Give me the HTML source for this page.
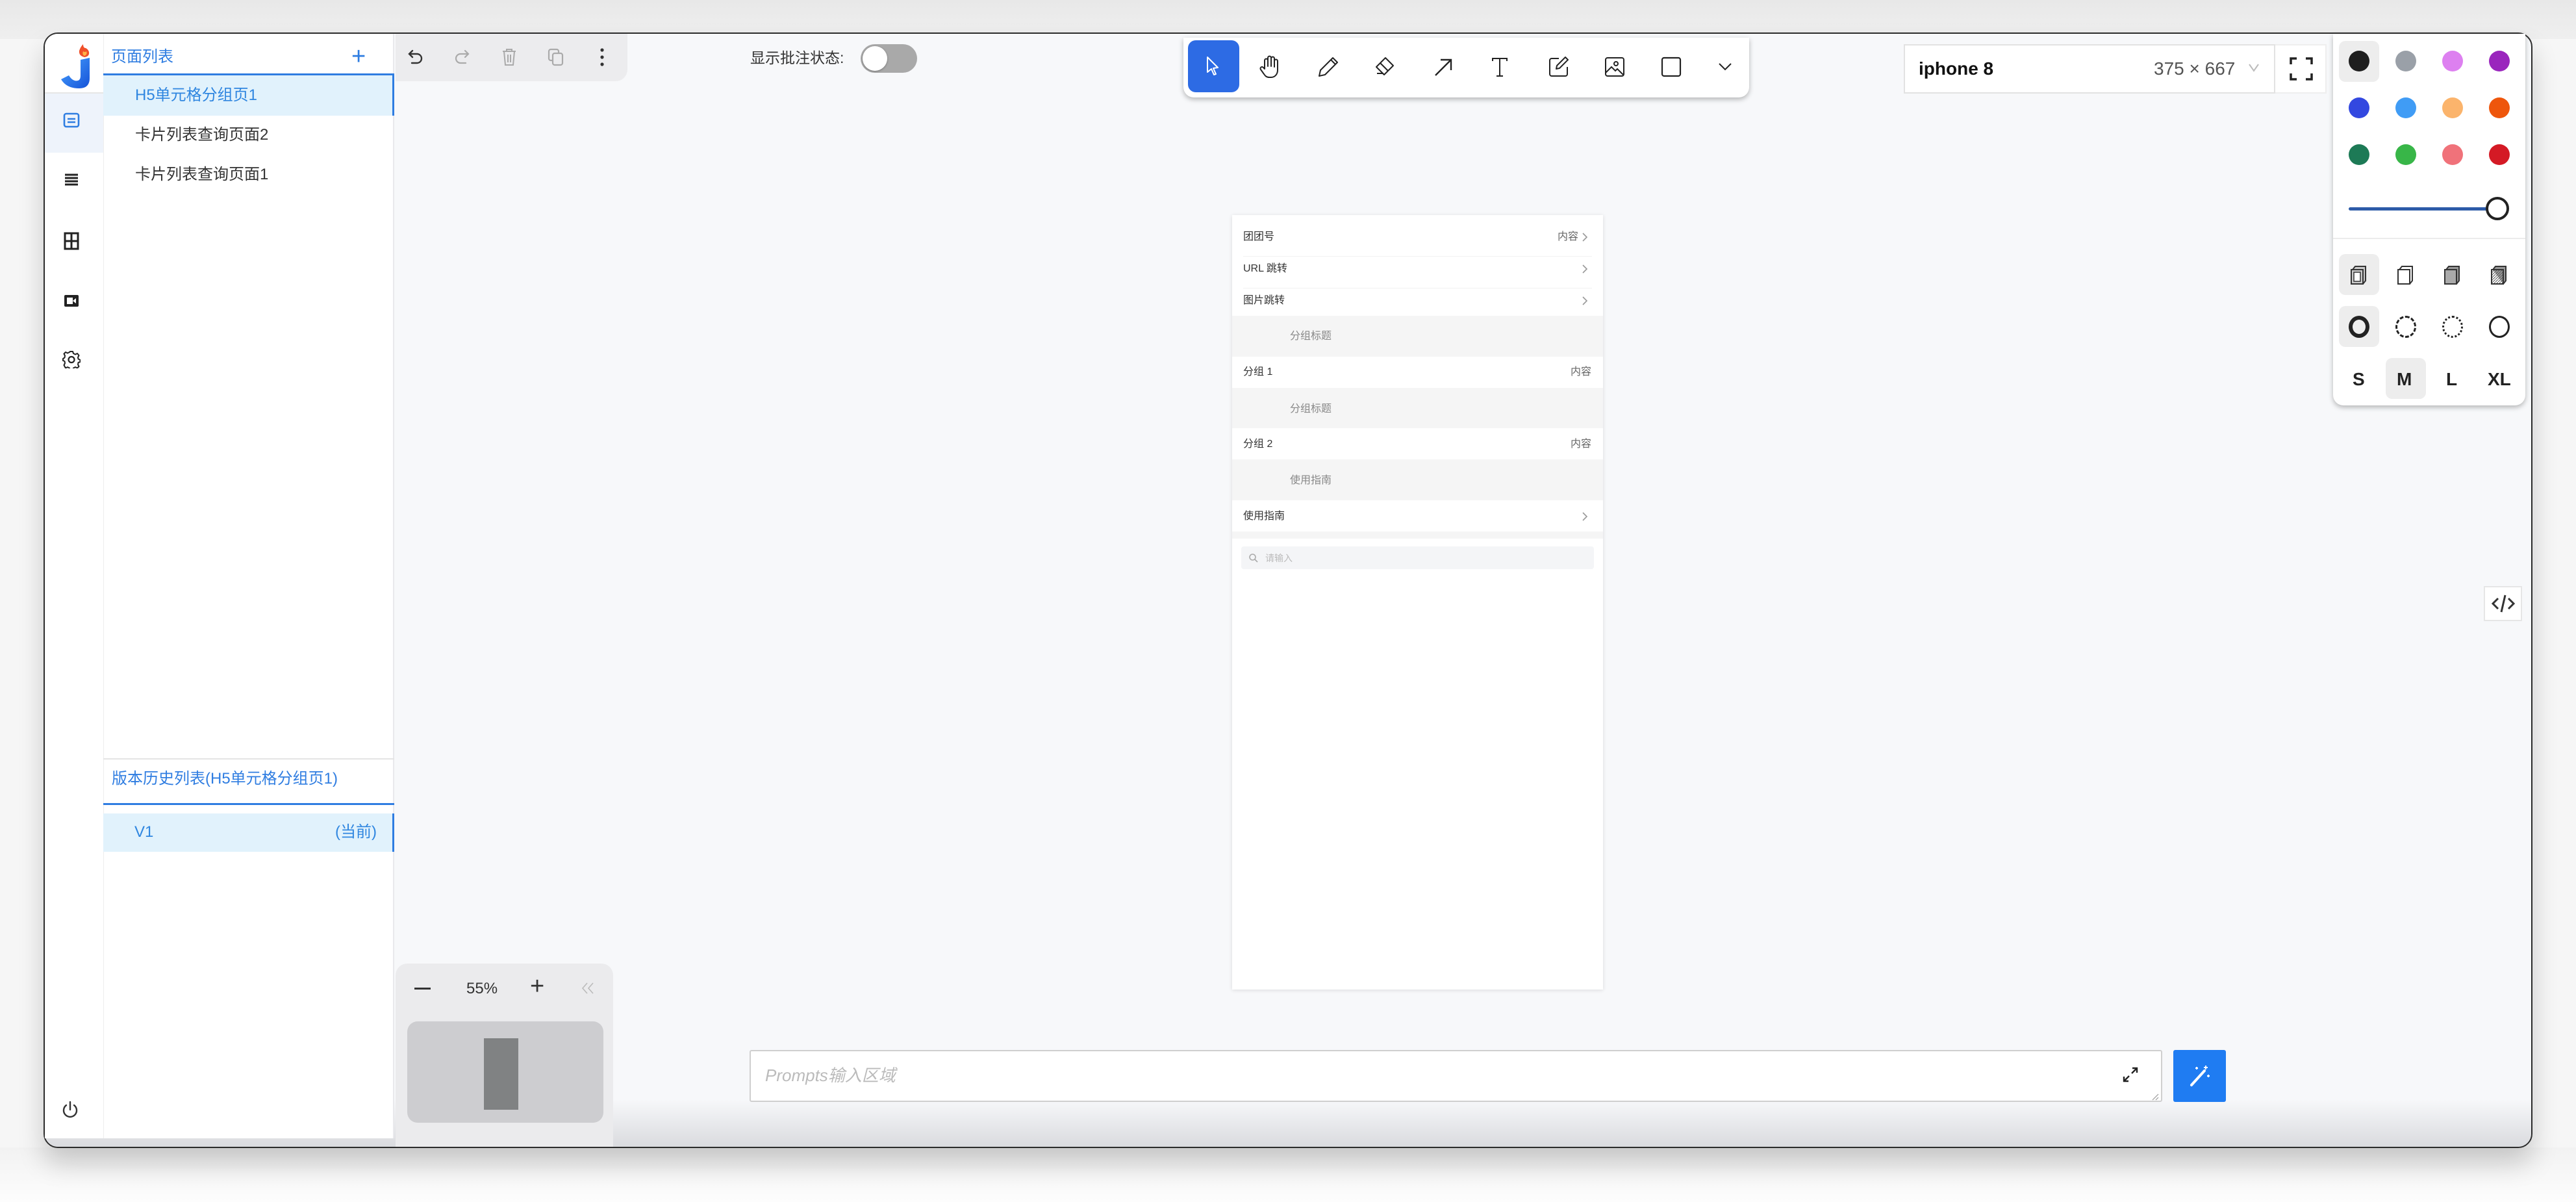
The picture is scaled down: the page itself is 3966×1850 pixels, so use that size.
<!DOCTYPE html>
<html><head><meta charset="utf-8"><style>
*{margin:0;padding:0;box-sizing:border-box}
body{width:3966px;height:1850px;background:#f6f6f6;position:relative;overflow:hidden;font-family:"Liberation Sans","Noto Sans CJK SC",sans-serif;color:#333}
.a{position:absolute}
.t{position:absolute;white-space:nowrap;line-height:1}
.dot{position:absolute;width:32px;height:32px;border-radius:50%}
.sel{position:absolute;width:62px;height:63px;background:#ededed;border-radius:10px}
</style></head><body>
<div class="a" style="left:0;top:0;width:3966px;height:60px;background:linear-gradient(#e8e8e8,#efefef)"></div>
<div class="a" style="left:0;top:1766px;width:3966px;height:84px;background:linear-gradient(#f2f2f2,#fdfdfd)"></div>
<!-- window -->
<div class="a" style="left:67px;top:50px;width:3832px;height:1717px;border:2px solid #2b2b2b;border-radius:22px;background:#f7f8fa;overflow:hidden;box-shadow:0 24px 40px rgba(0,0,0,.18)">
 <div class="a" style="left:0;top:1640px;width:3832px;height:80px;background:linear-gradient(rgba(225,226,230,0),rgba(215,216,220,1))"></div>
</div>
<!-- icon column -->
<div class="a" style="left:69px;top:52px;width:90px;height:1700px;background:#fff;border-radius:20px 0 0 0"></div>
<div class="a" style="left:69px;top:142px;width:90px;height:2px;background:#e6e6e6"></div>
<div class="a" style="left:69px;top:144px;width:90px;height:91px;background:#eef3fb"></div>
<svg class="a" style="left:88px;top:66px" width="56" height="72" viewBox="0 0 56 72">
 <defs><linearGradient id="jg" x1="0" y1="0" x2="1" y2="1"><stop offset="0" stop-color="#4aa3ff"/><stop offset="1" stop-color="#1452d8"/></linearGradient></defs>
 <path d="M36 26 L50 23 L50 54 Q50 70 34 70 Q14 70 6 56 L18 50 Q24 60 32 58 Q36 57 36 50 Z" fill="url(#jg)"/>
 <path d="M42 22 Q33 20 34 12 Q36 6 40 2 Q40 8 44 8 Q48 10 49 14 Q50 21 42 22Z" fill="#f0502a"/>
 <path d="M42 20 Q38 18 40 13 Q43 15 45 13 Q47 18 42 20Z" fill="#ffb347"/>
</svg>
<!-- side icons -->
<svg class="a" style="left:97px;top:172px" width="26" height="26" viewBox="0 0 26 26"><rect x="2" y="3" width="22" height="20" rx="3" fill="none" stroke="#2f7de1" stroke-width="2.6"/><path d="M7 11h12M7 16h12" stroke="#2f7de1" stroke-width="2.4"/></svg>
<svg class="a" style="left:98px;top:265px" width="24" height="24" viewBox="0 0 24 24"><path d="M2 4h20M2 9h20M2 14h20M2 19h20" stroke="#222" stroke-width="3"/></svg>
<svg class="a" style="left:97px;top:357px" width="26" height="28" viewBox="0 0 26 28"><path d="M3 2h20v24H3zM13 2v24M3 14h20" fill="none" stroke="#222" stroke-width="3"/></svg>
<svg class="a" style="left:97px;top:451px" width="26" height="24" viewBox="0 0 26 24"><rect x="2" y="3" width="22" height="18" rx="2" fill="#222"/><rect x="6" y="7" width="9" height="10" fill="#fff"/><path d="M20 8l-5 4 5 4z" fill="#fff"/></svg>
<svg class="a" style="left:96px;top:539px" width="28" height="28" viewBox="0 0 28 28"><path d="M12 2h4l1 3 3 1.5 3-1.5 2.5 3-1.5 3 .5 2.5 3 1.5v3l-3 1-.5 3 1.5 3-2.5 2.5-3-1.5-3 1.5-1 3h-4l-1-3-3-1.5-3 1.5L2.5 23 4 20l-.5-3L1 16v-3l2.5-1.5L4 8.5 2.5 5.5 5 3l3 1.5L11 3z" fill="none" stroke="#222" stroke-width="2" stroke-linejoin="round"/><circle cx="14" cy="14.5" r="4.5" fill="none" stroke="#222" stroke-width="2.2"/></svg>
<svg class="a" style="left:94px;top:1693px" width="28" height="30" viewBox="0 0 28 30"><path d="M14 3v12" stroke="#333" stroke-width="2.4" stroke-linecap="round"/><path d="M8 8a10 10 0 1 0 12 0" fill="none" stroke="#333" stroke-width="2.4" stroke-linecap="round"/></svg>
<!-- left panel -->
<div class="a" style="left:159px;top:52px;width:448px;height:1700px;background:#fff;border-left:1px solid #eee;border-right:2px solid #e9e9ec"></div>
<div class="t" style="left:171px;top:76px;font-size:24px;color:#2f7de1">页面列表</div>
<div class="t" style="left:541px;top:68px;font-size:38px;color:#2f7de1;font-weight:300">+</div>
<div class="a" style="left:159px;top:113px;width:448px;height:3px;background:#2f7de1"></div>
<div class="a" style="left:159px;top:116px;width:448px;height:62px;background:#e1f2fc;border-right:3px solid #2f7de1"></div>
<div class="t" style="left:208px;top:135px;font-size:24px;color:#2f86e0">H5单元格分组页1</div>
<div class="t" style="left:208px;top:196px;font-size:24px;color:#333">卡片列表查询页面2</div>
<div class="t" style="left:208px;top:257px;font-size:24px;color:#333">卡片列表查询页面1</div>
<div class="a" style="left:159px;top:1167px;width:448px;height:2px;background:#e4e4e4"></div>
<div class="t" style="left:172px;top:1187px;font-size:24px;color:#2f7de1">版本历史列表(H5单元格分组页1)</div>
<div class="a" style="left:159px;top:1236px;width:448px;height:3px;background:#2f7de1"></div>
<div class="a" style="left:159px;top:1252px;width:448px;height:59px;background:#e1f2fc;border-right:3px solid #2f7de1"></div>
<div class="t" style="left:207px;top:1269px;font-size:24px;color:#2f86e0">V1</div>
<div class="t" style="left:516px;top:1269px;font-size:24px;color:#2f86e0">(当前)</div>
<!-- undo toolbar -->
<div class="a" style="left:609px;top:52px;width:357px;height:73px;background:#ececee;border-radius:0 0 18px 0"></div>
<svg class="a" style="left:626px;top:74px" width="28" height="28" viewBox="0 0 28 28"><path d="M9 4L4 9l5 5M4 9h12a7 7 0 0 1 0 14h-8" fill="none" stroke="#333" stroke-width="2.4" stroke-linecap="round"/></svg>
<svg class="a" style="left:697px;top:74px" width="28" height="28" viewBox="0 0 28 28"><path d="M19 4l5 5-5 5M24 9H12a7 7 0 0 0 0 14h8" fill="none" stroke="#aaa" stroke-width="2.2" stroke-linecap="round"/></svg>
<svg class="a" style="left:770px;top:73px" width="28" height="30" viewBox="0 0 28 30"><path d="M4 6h20M10 6V3h8v3M6 6l2 21h12l2-21M12 11v12M16 11v12" fill="none" stroke="#aaa" stroke-width="2"/></svg>
<svg class="a" style="left:842px;top:73px" width="28" height="30" viewBox="0 0 28 30"><rect x="3" y="3" width="15" height="17" rx="3" fill="none" stroke="#aaa" stroke-width="2.2"/><rect x="9" y="9" width="15" height="18" rx="3" fill="#ececee" stroke="#aaa" stroke-width="2.2"/></svg>
<svg class="a" style="left:920px;top:73px" width="14" height="30" viewBox="0 0 14 30"><circle cx="7" cy="4" r="2.6" fill="#333"/><circle cx="7" cy="15" r="2.6" fill="#333"/><circle cx="7" cy="26" r="2.6" fill="#333"/></svg>
<!-- toggle -->
<div class="t" style="left:1155px;top:78px;font-size:23px;color:#333">显示批注状态:</div>
<div class="a" style="left:1325px;top:68px;width:87px;height:44px;border-radius:22px;background:#a9a9a9"></div>
<div class="a" style="left:1328px;top:71px;width:38px;height:38px;border-radius:50%;background:#fff;box-shadow:0 1px 3px rgba(0,0,0,.3)"></div>
<!-- main toolbar -->
<div class="a" style="left:1822px;top:58px;width:871px;height:92px;background:#fff;border-radius:0 0 16px 16px;box-shadow:0 3px 8px rgba(0,0,0,.28)"></div>
<div class="a" style="left:1829px;top:62px;width:79px;height:80px;background:#2d6be4;border-radius:12px"></div>
<svg class="a" style="left:1853px;top:85px" width="30" height="36" viewBox="0 0 30 36"><path d="M6 3l16 16-7 1 4 9-3 1-4-9-6 5z" fill="none" stroke="#fff" stroke-width="2" stroke-linejoin="round"/></svg>
<svg class="a" style="left:1938px;top:84px" width="36" height="38" viewBox="0 0 36 38"><path d="M9 22V9a2.5 2.5 0 0 1 5 0v9V5a2.5 2.5 0 0 1 5 0v13V6a2.5 2.5 0 0 1 5 0v13V10a2.5 2.5 0 0 1 5 0v14c0 6-4 11-10 11h-3c-4 0-6-2-8-5l-5-7a2.5 2.5 0 0 1 4-3z" fill="none" stroke="#222" stroke-width="2" stroke-linejoin="round"/></svg>
<svg class="a" style="left:2028px;top:86px" width="34" height="34" viewBox="0 0 34 34"><path d="M24 3l7 7L12 29l-9 2 2-9z M21 6l7 7" fill="none" stroke="#222" stroke-width="2" stroke-linejoin="round"/></svg>
<svg class="a" style="left:2113px;top:86px" width="36" height="34" viewBox="0 0 36 34"><path d="M20 3l12 12-14 14-12-12z M12 11l12 12M7 27h10" fill="none" stroke="#222" stroke-width="2" stroke-linejoin="round"/></svg>
<svg class="a" style="left:2206px;top:88px" width="32" height="32" viewBox="0 0 32 32"><path d="M4 28L28 4M12 4h16v16" fill="none" stroke="#222" stroke-width="2.4"/></svg>
<svg class="a" style="left:2294px;top:86px" width="30" height="34" viewBox="0 0 30 34"><path d="M4 8V4h22v4M15 4v27M10 31h10" fill="none" stroke="#222" stroke-width="2"/></svg>
<svg class="a" style="left:2382px;top:85px" width="36" height="36" viewBox="0 0 36 36"><path d="M18 5H7a3 3 0 0 0-3 3v21a3 3 0 0 0 3 3h21a3 3 0 0 0 3-3V18" fill="none" stroke="#222" stroke-width="2"/><path d="M28 3l4 4-13 13-5 1 1-5z" fill="none" stroke="#222" stroke-width="2" stroke-linejoin="round"/></svg>
<svg class="a" style="left:2469px;top:86px" width="34" height="34" viewBox="0 0 34 34"><rect x="3" y="3" width="28" height="28" rx="3" fill="none" stroke="#222" stroke-width="2"/><circle cx="19" cy="12" r="3" fill="none" stroke="#222" stroke-width="2"/><path d="M3 26l9-9 6 6 3-3 10 10" fill="none" stroke="#222" stroke-width="2"/></svg>
<svg class="a" style="left:2556px;top:86px" width="34" height="34" viewBox="0 0 34 34"><rect x="3" y="3" width="28" height="28" rx="3" fill="none" stroke="#222" stroke-width="2.2"/></svg>
<svg class="a" style="left:2644px;top:94px" width="24" height="16" viewBox="0 0 24 16"><path d="M3 4l9 9 9-9" fill="none" stroke="#222" stroke-width="2"/></svg>
<!-- device select -->
<div class="a" style="left:2931px;top:68px;width:572px;height:76px;background:#fff;border:2px solid #e2e2e2"></div>
<div class="t" style="left:2954px;top:92px;font-size:28px;font-weight:bold;color:#111">iphone 8</div>
<div class="t" style="left:3316px;top:92px;font-size:28px;color:#555">375 × 667</div>
<svg class="a" style="left:3460px;top:96px" width="20" height="16" viewBox="0 0 20 16"><path d="M3 3l7 10 7-10" fill="none" stroke="#bbb" stroke-width="2"/></svg>
<div class="a" style="left:3503px;top:68px;width:79px;height:76px;background:#fff;border:2px solid #eee;border-left:none"></div>
<svg class="a" style="left:3524px;top:87px" width="38" height="38" viewBox="0 0 38 38"><path d="M3 12V3h9M26 3h9v9M35 26v9h-9M12 35H3v-9" fill="none" stroke="#222" stroke-width="3.5"/></svg>
<!-- color panel -->
<div class="a" style="left:3592px;top:52px;width:296px;height:572px;background:#fff;border-radius:0 0 16px 16px;box-shadow:0 3px 8px rgba(0,0,0,.28)"></div>
<div class="sel" style="left:3601px;top:63px"></div>
<div class="dot" style="left:3616px;top:78px;background:#1e1e1e"></div>
<div class="dot" style="left:3688px;top:78px;background:#9aa0a8"></div>
<div class="dot" style="left:3760px;top:78px;background:#dd80f0"></div>
<div class="dot" style="left:3832px;top:78px;background:#9a25bd"></div>
<div class="dot" style="left:3616px;top:150px;background:#3348e0"></div>
<div class="dot" style="left:3688px;top:150px;background:#409cf5"></div>
<div class="dot" style="left:3760px;top:150px;background:#fbb46c"></div>
<div class="dot" style="left:3832px;top:150px;background:#ee560c"></div>
<div class="dot" style="left:3616px;top:222px;background:#1d7a56"></div>
<div class="dot" style="left:3688px;top:222px;background:#38b648"></div>
<div class="dot" style="left:3760px;top:222px;background:#f0727a"></div>
<div class="dot" style="left:3832px;top:222px;background:#d41a25"></div>
<div class="a" style="left:3616px;top:319px;width:214px;height:5px;background:#2d5ba8;border-radius:3px"></div>
<div class="a" style="left:3827px;top:303px;width:36px;height:36px;border-radius:50%;background:#fff;border:4px solid #222"></div>
<div class="a" style="left:3592px;top:366px;width:296px;height:2px;background:#ececec"></div>
<div class="sel" style="left:3601px;top:391px"></div>
<svg class="a" style="left:3614px;top:406px" width="36" height="36" viewBox="0 0 36 36"><path d="M8 9l4-5h16v22l-4 5" fill="#ccc" stroke="#333" stroke-width="2"/><rect x="6" y="9" width="18" height="22" fill="#ccc" stroke="#333" stroke-width="2"/><rect x="10" y="13" width="10" height="14" fill="#fff" stroke="#333" stroke-width="1.5"/></svg>
<svg class="a" style="left:3686px;top:406px" width="36" height="36" viewBox="0 0 36 36"><path d="M8 9l4-5h16v22l-4 5" fill="#fff" stroke="#333" stroke-width="2"/><rect x="6" y="9" width="18" height="22" fill="#fff" stroke="#333" stroke-width="2"/></svg>
<svg class="a" style="left:3758px;top:406px" width="36" height="36" viewBox="0 0 36 36"><path d="M8 9l4-5h16v22l-4 5" fill="#999" stroke="#333" stroke-width="2"/><rect x="6" y="9" width="18" height="22" fill="#aaa" stroke="#333" stroke-width="2"/></svg>
<svg class="a" style="left:3830px;top:406px" width="36" height="36" viewBox="0 0 36 36"><defs><pattern id="hp" width="4" height="4" patternUnits="userSpaceOnUse"><path d="M0 4L4 0" stroke="#555" stroke-width="1"/></pattern></defs><path d="M8 9l4-5h16v22l-4 5" fill="#999" stroke="#333" stroke-width="2"/><rect x="6" y="9" width="18" height="22" fill="url(#hp)" stroke="#333" stroke-width="2"/></svg>
<div class="sel" style="left:3601px;top:471px"></div>
<div class="a" style="left:3616px;top:486px;width:32px;height:34px;border-radius:50%;border:6px solid #222"></div>
<div class="a" style="left:3688px;top:486px;width:32px;height:34px;border-radius:50%;border:3px dashed #222"></div>
<div class="a" style="left:3760px;top:486px;width:32px;height:34px;border-radius:50%;border:3px dotted #222"></div>
<div class="a" style="left:3832px;top:486px;width:32px;height:34px;border-radius:50%;border:3px solid #222"></div>
<div class="a" style="left:3673px;top:551px;width:62px;height:63px;background:#ededed;border-radius:10px"></div>
<div class="t" style="left:3622px;top:570px;font-size:28px;font-weight:bold;color:#222">S</div>
<div class="t" style="left:3690px;top:570px;font-size:28px;font-weight:bold;color:#222">M</div>
<div class="t" style="left:3766px;top:570px;font-size:28px;font-weight:bold;color:#222">L</div>
<div class="t" style="left:3830px;top:570px;font-size:28px;font-weight:bold;color:#222">XL</div>
<!-- code button -->
<div class="a" style="left:3824px;top:902px;width:59px;height:54px;background:#fff;border:2px solid #e6e6e6"></div>
<svg class="a" style="left:3835px;top:912px" width="38" height="34" viewBox="0 0 38 34"><path d="M11 9l-8 8 8 8M27 9l8 8-8 8M22 4l-6 26" fill="none" stroke="#333" stroke-width="3"/></svg>
<!-- phone -->
<div class="a" style="left:1897px;top:331px;width:571px;height:1192px;background:#fff;box-shadow:0 1px 6px rgba(0,0,0,.12)"></div>
<div class="a" style="left:1914px;top:394px;width:537px;height:1px;background:#f1f1f1"></div>
<div class="a" style="left:1914px;top:443px;width:537px;height:1px;background:#f1f1f1"></div>
<div class="a" style="left:1897px;top:486px;width:571px;height:63px;background:#f5f5f5"></div>
<div class="a" style="left:1897px;top:597px;width:571px;height:62px;background:#f5f5f5"></div>
<div class="a" style="left:1897px;top:707px;width:571px;height:63px;background:#f5f5f5"></div>
<div class="a" style="left:1897px;top:818px;width:571px;height:11px;background:#f5f5f5"></div>
<div class="t" style="left:1914px;top:357px;font-size:16px;color:#333">团团号</div>
<div class="t" style="left:2398px;top:357px;font-size:16px;color:#666">内容</div>
<div class="t" style="left:1914px;top:406px;font-size:16px;color:#333">URL 跳转</div>
<div class="t" style="left:1914px;top:455px;font-size:16px;color:#333">图片跳转</div>
<div class="t" style="left:1986px;top:510px;font-size:16px;color:#888">分组标题</div>
<div class="t" style="left:1914px;top:565px;font-size:16px;color:#333">分组 1</div>
<div class="t" style="left:2418px;top:565px;font-size:16px;color:#666">内容</div>
<div class="t" style="left:1986px;top:622px;font-size:16px;color:#888">分组标题</div>
<div class="t" style="left:1914px;top:676px;font-size:16px;color:#333">分组 2</div>
<div class="t" style="left:2418px;top:676px;font-size:16px;color:#666">内容</div>
<div class="t" style="left:1986px;top:732px;font-size:16px;color:#888">使用指南</div>
<div class="t" style="left:1914px;top:787px;font-size:16px;color:#333">使用指南</div>
<svg class="a" style="left:2434px;top:357px" width="12" height="16" viewBox="0 0 12 16"><path d="M3 2l6 6-6 6" fill="none" stroke="#999" stroke-width="1.6"/></svg>
<svg class="a" style="left:2434px;top:406px" width="12" height="16" viewBox="0 0 12 16"><path d="M3 2l6 6-6 6" fill="none" stroke="#999" stroke-width="1.6"/></svg>
<svg class="a" style="left:2434px;top:455px" width="12" height="16" viewBox="0 0 12 16"><path d="M3 2l6 6-6 6" fill="none" stroke="#999" stroke-width="1.6"/></svg>
<svg class="a" style="left:2434px;top:787px" width="12" height="16" viewBox="0 0 12 16"><path d="M3 2l6 6-6 6" fill="none" stroke="#999" stroke-width="1.6"/></svg>
<div class="a" style="left:1911px;top:841px;width:543px;height:35px;background:#f4f5f7;border-radius:4px"></div>
<svg class="a" style="left:1922px;top:851px" width="16" height="16" viewBox="0 0 16 16"><circle cx="6.5" cy="6.5" r="4.5" fill="none" stroke="#aaa" stroke-width="1.6"/><path d="M10 10l4 4" stroke="#aaa" stroke-width="1.6"/></svg>
<div class="t" style="left:1948px;top:852px;font-size:14px;color:#bbb">请输入</div>
<!-- zoom panel -->
<div class="a" style="left:609px;top:1483px;width:335px;height:282px;background:#ebebed;border-radius:18px 18px 0 0"></div>
<div class="a" style="left:638px;top:1520px;width:25px;height:3px;background:#333"></div>
<div class="t" style="left:718px;top:1510px;font-size:24px;color:#333">55%</div>
<div class="t" style="left:816px;top:1499px;font-size:38px;color:#333;font-weight:300">+</div>
<svg class="a" style="left:894px;top:1510px" width="24" height="22" viewBox="0 0 24 22"><path d="M10 3l-7 8 7 8M19 3l-7 8 7 8" fill="none" stroke="#bbb" stroke-width="1.6"/></svg>
<div class="a" style="left:627px;top:1572px;width:302px;height:156px;background:#cdcdd0;border-radius:16px"></div>
<div class="a" style="left:745px;top:1598px;width:53px;height:110px;background:#808283"></div>
<!-- prompt -->
<div class="a" style="left:1154px;top:1616px;width:2175px;height:80px;background:#fff;border:2px solid #cfcfcf;border-radius:3px"></div>
<div class="t" style="left:1178px;top:1642px;font-size:26px;color:#bbb;font-style:italic">Prompts输入区域</div>
<svg class="a" style="left:3266px;top:1640px" width="28" height="28" viewBox="0 0 28 28"><path d="M17 4h7v7M24 4l-8 8M11 24H4v-7M4 24l8-8" fill="none" stroke="#222" stroke-width="2.4"/></svg>
<svg class="a" style="left:3312px;top:1682px" width="12" height="12" viewBox="0 0 12 12"><path d="M11 2L2 11M11 7L7 11" stroke="#999" stroke-width="1.2"/></svg>
<div class="a" style="left:3346px;top:1616px;width:81px;height:80px;background:#1f7cf2;border-radius:3px"></div>
<svg class="a" style="left:3368px;top:1636px" width="38" height="40" viewBox="0 0 38 40"><path d="M6 34L26 12" stroke="#fff" stroke-width="4" stroke-linecap="round"/><path d="M28 4v6M25 7h6M14 6v4M12 8h4M32 18v4M30 20h4" stroke="#fff" stroke-width="2"/></svg>
</body></html>
